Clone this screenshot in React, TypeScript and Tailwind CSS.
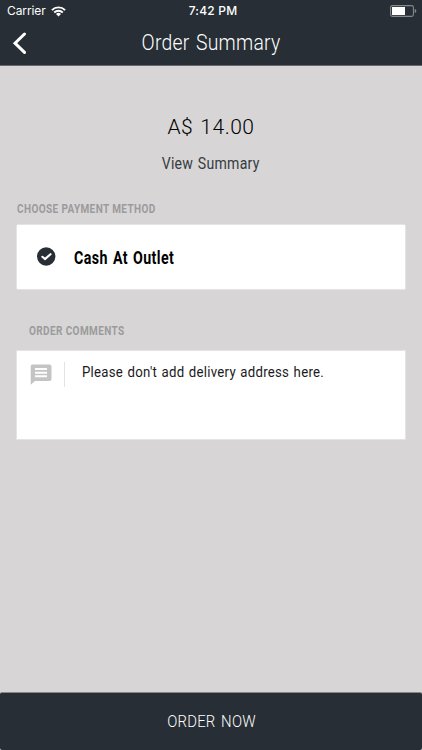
import type { ReactNode } from "react";

function StatusBar() {
  return (
    <div className="grid grid-cols-3 items-center h-[22px] pl-[7px] pr-[5px] font-['Inter',sans-serif] text-[12px] leading-[22px]">
      <div className="flex items-center gap-[5px]">
        <span className="-tracking-[0.1px]">Carrier</span>
        <svg width="15" height="11" viewBox="0 0 15 11" fill="none" stroke="currentColor">
          <path d="M0.9 4.1a9.4 9.4 0 0 1 13.2 0" strokeWidth="1.9" />
          <path d="M3.2 6.5a6.1 6.1 0 0 1 8.6 0" strokeWidth="1.8" />
          <path d="M7.5 10.6 5 8.1a3.5 3.5 0 0 1 5 0z" fill="currentColor" stroke="none" />
        </svg>
      </div>
      <span className="pl-[2px] text-center font-medium tracking-[0.2px]">7:42 PM</span>
      <svg className="justify-self-end" width="27" height="12" viewBox="0 0 27 12">
        <rect x="0.6" y="0.6" width="22.8" height="10.8" rx="1.8" fill="none" stroke="#85898d" strokeWidth="1.1" />
        <rect x="2" y="2" width="13" height="8" fill="#fff" />
        <path d="M24.7 4v4c1-.3 1.6-1 1.6-2s-.6-1.7-1.6-2z" fill="#85898d" />
      </svg>
    </div>
  );
}

function SectionLabel({ children }: { children: ReactNode }) {
  return (
    <h2 className="w-max origin-left scale-x-[0.77] font-bold text-[13px] leading-[14px] tracking-[0.5px] text-[#9b9b9d] whitespace-nowrap">
      {children}
    </h2>
  );
}

export default function App() {
  return (
    <div className="flex flex-col w-[422px] h-[750px] bg-[#d7d5d6] font-['Roboto',sans-serif] overflow-hidden">
      {/* Header */}
      <header className="h-[66px] bg-[#272e35] border-b border-[#64676b] text-white">
        <StatusBar />
        <div className="grid grid-cols-[40px_1fr_40px] items-center h-[42px]">
          <svg className="ml-[12px]" width="15" height="22" viewBox="0 0 15 22" fill="none">
            <path d="M12.5 2 3 11.2l9.5 9.2" stroke="#fff" strokeWidth="3" strokeLinecap="round" />
          </svg>
          <h1 className="scale-x-[0.9] text-center text-[21.5px] font-light tracking-[0.3px] [word-spacing:1.5px]">
            Order Summary
          </h1>
        </div>
      </header>

      {/* Total */}
      <div className="flex flex-col items-center pt-[47px]">
        <p className="text-[21px] leading-[28px] font-light tracking-[0.5px] [word-spacing:1.5px] text-black">
          A$ 14.00
        </p>
        <button className="mt-[13px] scale-x-[0.88] text-[16px] leading-[20px] tracking-[0.3px] [word-spacing:1px] text-[#363b40]">
          View Summary
        </button>
      </div>

      {/* Payment method */}
      <section className="px-4 pt-[28px]">
        <div className="pl-px">
          <SectionLabel>CHOOSE PAYMENT METHOD</SectionLabel>
        </div>
        <div className="flex items-center mt-[8px] h-[66px] rounded-[2px] border border-[#e5e4e5] bg-white pl-[20px]">
          <svg className="-mt-px" width="19" height="19" viewBox="0 0 19 19" fill="none">
            <circle cx="9.2" cy="9.5" r="9.2" fill="#272e35" />
            <path d="m5.4 9.8 2.5 2.3 5.6-4.9" stroke="#fff" strokeWidth="2.1" strokeLinecap="round" strokeLinejoin="round" />
          </svg>
          <span className="ml-[17.5px] origin-left scale-x-[0.79] font-bold text-[18px] tracking-[0.5px] [word-spacing:1.5px] text-black">
            Cash At Outlet
          </span>
        </div>
      </section>

      {/* Comments */}
      <section className="px-4 pt-[34px]">
        <div className="pl-[13px]">
          <SectionLabel>ORDER COMMENTS</SectionLabel>
        </div>
        <div className="flex items-start mt-[12px] h-[90px] border border-[#e5e4e5] bg-white pt-[11px] pl-[13px]">
          <svg className="mt-[2px]" width="22" height="22" viewBox="0 0 22 22">
            <path d="M2.5.5h17a2 2 0 0 1 2 2V15a2 2 0 0 1-2 2H5L.7 20.7V2.500a2 2 0 0 1 1.800-2z" fill="#c4c4c5" />
            <path d="M5 5h12M5 8.700h12M5 12.300h12" stroke="#fff" strokeWidth="2" />
          </svg>
          <div className="ml-[12px] w-px h-[25px] bg-[#e3e3e3]" />
          <p className="ml-[17px] origin-left scale-x-[0.88] text-[15px] leading-[20px] tracking-[0.3px] [word-spacing:1px] text-[#1b1b1b] whitespace-nowrap">
            Please don't add delivery address here.
          </p>
        </div>
      </section>

      {/* Submit */}
      <button className="mt-auto h-[58px] shrink-0 rounded-[2px] border-t border-[#85878a] bg-[#272e35] text-[16px] font-light text-white">
        <span className="inline-block scale-x-[0.93] tracking-[0.2px] [word-spacing:2px]">ORDER NOW</span>
      </button>
    </div>
  );
}
